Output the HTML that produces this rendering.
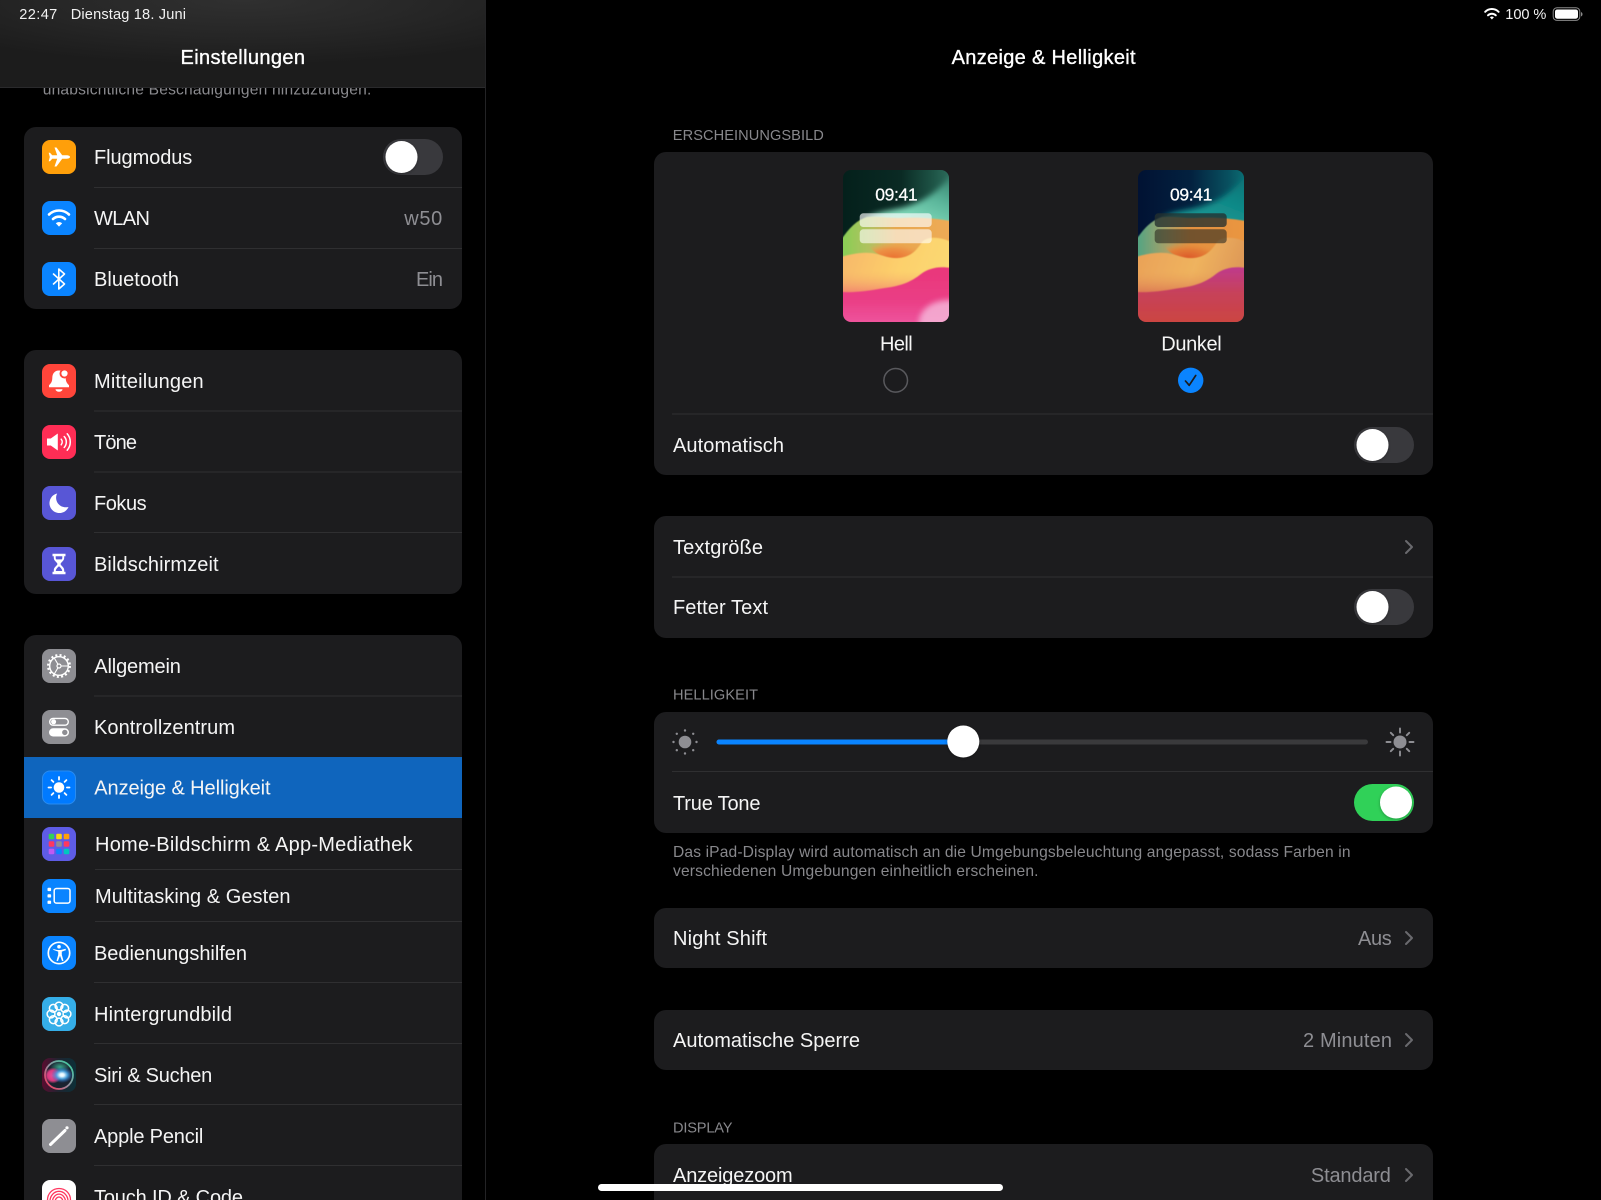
<!DOCTYPE html>
<html lang="de"><head><meta charset="utf-8"><title>Anzeige &amp; Helligkeit</title>
<style>
html,body{margin:0;padding:0;background:#000;overflow:hidden}
svg{display:block}
text{font-family:"Liberation Sans",sans-serif;font-size:20px;fill:#f5f5f5}
.v{fill:#8e8e93}
.s{font-size:14.6px;fill:#88888c}
.f{font-size:15.6px;fill:#88888c}
.b{stroke:#fff;stroke-width:.35;fill:#fff}
.st{font-size:14.6px;fill:#f2f2f2}
.sep{stroke:#2f2f31;stroke-width:1}
.chev{fill:none;stroke:#6a6a6e;stroke-width:2;stroke-linecap:round;stroke-linejoin:round}
</style></head>
<body>
<svg xmlns="http://www.w3.org/2000/svg" width="1601" height="1200" viewBox="0 0 1601 1200">
<defs>
<radialGradient id="hdr" cx=".5" cy="0" r=".75"><stop offset="0" stop-color="#303030"/><stop offset=".55" stop-color="#262626"/><stop offset="1" stop-color="#1c1c1c"/></radialGradient>
<filter id="kshadow" x="-30%" y="-30%" width="160%" height="160%"><feDropShadow dx="0" dy="1" stdDeviation="1.5" flood-color="#000" flood-opacity=".3"/></filter>
<filter id="soft" x="-5%" y="-5%" width="110%" height="110%"><feGaussianBlur stdDeviation=".6"/></filter>
<filter id="soft2" x="-20%" y="-20%" width="140%" height="140%"><feGaussianBlur stdDeviation="3"/></filter>
<clipPath id="thumb"><rect width="106" height="152" rx="8"/></clipPath>
<clipPath id="ic"><rect width="34" height="34" rx="8"/></clipPath>

<linearGradient id="lTop" x1="0" y1="0" x2="1" y2="0"><stop offset="0" stop-color="#04201b"/><stop offset=".55" stop-color="#0a2a24"/><stop offset=".85" stop-color="#1e5446"/><stop offset="1" stop-color="#2c6a5a"/></linearGradient>
<linearGradient id="lMint" x1="1" y1="0" x2=".4" y2="1"><stop offset="0" stop-color="#2f7664"/><stop offset=".45" stop-color="#5cb79c"/><stop offset=".8" stop-color="#7fd8b8"/><stop offset="1" stop-color="#8adfc0"/></linearGradient>
<linearGradient id="lMid" x1="0" y1="0" x2="1" y2="0"><stop offset="0" stop-color="#86cf55"/><stop offset=".28" stop-color="#b6c060"/><stop offset=".5" stop-color="#e8a850"/><stop offset="1" stop-color="#eeaa55"/></linearGradient>
<radialGradient id="lBowl" cx=".5" cy=".95" r=".55"><stop offset="0" stop-color="#ea7232"/><stop offset=".6" stop-color="#ec9245"/><stop offset="1" stop-color="#eda552" stop-opacity="0"/></radialGradient>
<linearGradient id="lYel" x1="0" y1="0" x2="1" y2=".2"><stop offset="0" stop-color="#f6b56a"/><stop offset=".6" stop-color="#fdd06c"/><stop offset="1" stop-color="#fbd872"/></linearGradient>
<linearGradient id="lYel2" x1="0" y1="0" x2="0" y2="1"><stop offset=".35" stop-color="#f5b468" stop-opacity="0"/><stop offset="1" stop-color="#ef6072"/></linearGradient>
<linearGradient id="lPink" x1="0" y1="0" x2="0" y2="1"><stop offset="0" stop-color="#e9367a"/><stop offset=".6" stop-color="#ea3f86"/><stop offset="1" stop-color="#ee569e"/></linearGradient>

<linearGradient id="dTop" x1="0" y1="0" x2="1" y2="0"><stop offset="0" stop-color="#011233"/><stop offset=".5" stop-color="#03213f"/><stop offset=".85" stop-color="#08505f"/><stop offset="1" stop-color="#0b6c72"/></linearGradient>
<linearGradient id="dMint" x1="1" y1="0" x2=".4" y2="1"><stop offset="0" stop-color="#0b6f74"/><stop offset=".5" stop-color="#118a88"/><stop offset="1" stop-color="#18a09a"/></linearGradient>
<linearGradient id="dMid" x1="0" y1="0" x2="1" y2="0"><stop offset="0" stop-color="#4fa584"/><stop offset=".28" stop-color="#a8a068"/><stop offset=".5" stop-color="#e4913f"/><stop offset="1" stop-color="#ea9640"/></linearGradient>
<radialGradient id="dBowl" cx=".5" cy=".95" r=".55"><stop offset="0" stop-color="#dd5a2a"/><stop offset=".6" stop-color="#e37e36"/><stop offset="1" stop-color="#e9923e" stop-opacity="0"/></radialGradient>
<linearGradient id="dYel" x1="0" y1="0" x2="1" y2=".2"><stop offset="0" stop-color="#e9a058"/><stop offset=".6" stop-color="#efb35e"/><stop offset="1" stop-color="#df9a58"/></linearGradient>
<linearGradient id="dYel2" x1="0" y1="0" x2="0" y2="1"><stop offset=".35" stop-color="#e9a058" stop-opacity="0"/><stop offset="1" stop-color="#d25a50"/></linearGradient>
<linearGradient id="dPink" x1="0" y1="0" x2="0" y2="1"><stop offset="0" stop-color="#bf3a8c"/><stop offset=".45" stop-color="#c7425a"/><stop offset="1" stop-color="#cc4540"/></linearGradient>

<linearGradient id="siriBg" x1="0" y1=".5" x2="1" y2=".5"><stop offset="0" stop-color="#5a0c30"/><stop offset=".5" stop-color="#1e2430"/><stop offset="1" stop-color="#0c3038"/></linearGradient>
<linearGradient id="siriRing" x1="0" y1="1" x2="1" y2="0"><stop offset="0" stop-color="#ff2d55"/><stop offset=".5" stop-color="#9090a0"/><stop offset="1" stop-color="#30d8a0"/></linearGradient>
<radialGradient id="siriInner" cx=".5" cy=".5" r=".5"><stop offset="0" stop-color="#fff"/><stop offset=".2" stop-color="#e0f6ff"/><stop offset=".5" stop-color="#4aa8e8" stop-opacity=".9"/><stop offset="1" stop-color="#2060c0" stop-opacity="0"/></radialGradient>
<radialGradient id="siriPink" cx=".5" cy=".5" r=".5"><stop offset="0" stop-color="#f0509a"/><stop offset=".65" stop-color="#d83a80"/><stop offset="1" stop-color="#e8458a" stop-opacity="0"/></radialGradient>
<radialGradient id="siriGreen" cx=".5" cy=".5" r=".5"><stop offset="0" stop-color="#40c8a0" stop-opacity=".8"/><stop offset="1" stop-color="#40c8a0" stop-opacity="0"/></radialGradient>
</defs>

<rect width="1601" height="1200" fill="#000"/>

<!-- Sidebar -->
<rect x="485" y="0" width="1" height="1200" fill="#232325"/>
<text class="f" x="42.7" y="94.7" textLength="328.6" style="fill:#8a8a8e">unabsichtliche Beschädigungen hinzuzufügen.</text>
<rect x="0" y="0" width="485" height="87" fill="url(#hdr)"/>
<rect x="0" y="87" width="485" height="1" fill="#2a2a2c"/>
<text class="st" x="19.3" y="19" textLength="38">22:47</text>
<text class="st" x="70.7" y="19" textLength="115.3">Dienstag 18. Juni</text>
<text class="b" x="180.5" y="64" textLength="124.5">Einstellungen</text>

<!-- Group 1 -->
<rect x="24" y="127" width="438" height="182" rx="12" fill="#1c1c1e"/>
<line class="sep" x1="94" y1="187.5" x2="462" y2="187.5"/>
<line class="sep" x1="94" y1="248.5" x2="462" y2="248.5"/>
<text x="94" y="164" textLength="98.3">Flugmodus</text>
<text x="94" y="225" textLength="56">WLAN</text>
<text x="94" y="286" textLength="85">Bluetooth</text>
<text class="v" x="404.3" y="225" textLength="38">w50</text>
<text class="v" x="416" y="286" textLength="27">Ein</text>
<rect x="383" y="139" width="60" height="36" rx="18" fill="#39393d"/>
<circle cx="401.500" cy="157" r="16" fill="#fff" filter="url(#kshadow)"/>

<g transform="translate(42,140)"><rect width="34" height="34" rx="8" fill="#ff9f0a"/>
<path fill="#fff" d="M28 17c0-1.100-1.800-1.700-3.200-1.700h-4.600L14.500 7.500h-2l2.700 7.800h-5L8 12.700H6.700L7.800 17l-1.100 4.300H8l2.200-2.600h5l-2.700 7.800h2l5.700-7.800h4.600c1.400 0 3.200-.6 3.200-1.700z"/></g>
<g transform="translate(42,201)"><rect width="34" height="34" rx="8" fill="#0a84ff"/>
<g fill="none" stroke="#fff" stroke-width="2.600" stroke-linecap="round"><path d="M7 13.500a14.500 14.500 0 0 1 20 0"/><path d="M11 18a9 9 0 0 1 12 0"/></g>
<path fill="#fff" d="M17 25.600l-3.200-3.300a4.600 4.600 0 0 1 6.400 0z"/></g>
<g transform="translate(42,262)"><rect width="34" height="34" rx="8" fill="#0a84ff"/>
<path fill="none" stroke="#fff" stroke-width="1.600" stroke-linejoin="round" stroke-linecap="round" d="M11.500 12L22.500 22 16.800 27V7L22.500 12 11.500 22"/></g>

<!-- Group 2 -->
<rect x="24" y="350" width="438" height="244" rx="12" fill="#1c1c1e"/>
<line class="sep" x1="94" y1="411" x2="462" y2="411"/>
<line class="sep" x1="94" y1="472" x2="462" y2="472"/>
<line class="sep" x1="94" y1="532.5" x2="462" y2="532.5"/>
<text x="94" y="388" textLength="109.600">Mitteilungen</text>
<text x="94" y="449" textLength="43">Töne</text>
<text x="94" y="510" textLength="52.600">Fokus</text>
<text x="94" y="571" textLength="124.600">Bildschirmzeit</text>

<g transform="translate(42,364)"><rect width="34" height="34" rx="8" fill="#ff453a"/>
<path fill="#fff" d="M17 6.500c-4.400 0-6.600 3.200-6.700 7.200-.1 3.400-.7 5-3.300 7.600v2h20v-2c-2.600-2.600-3.200-4.200-3.300-7.600C23.600 9.700 21.400 6.500 17 6.500z"/>
<path fill="#fff" d="M13.500 25.200h7a3.500 2.600 0 0 1-7 0z"/>
<circle cx="22.500" cy="9.500" r="5" fill="#ff453a"/><circle cx="22.500" cy="9.500" r="3.100" fill="#fff"/></g>
<g transform="translate(42,425)"><rect width="34" height="34" rx="8" fill="#ff2d55"/>
<path fill="#fff" d="M5 13.500h3.800L15.800 8.500v17L8.800 20.500H5z"/>
<g fill="none" stroke="#fff" stroke-width="1.500" stroke-linecap="round"><path d="M19.200 14.200a4.500 4.500 0 0 1 0 5.600"/><path d="M22.200 11.500a8.200 8.200 0 0 1 0 11"/><path d="M25.200 8.800a12.500 12.500 0 0 1 0 16.400"/></g></g>
<g transform="translate(42,486)"><rect width="34" height="34" rx="8" fill="#5856d6"/>
<path fill="#fff" d="M15.200 7.500a9.900 9.900 0 1 0 11.300 13.500c-.9.200-1.800.3-2.700.3-6 0-9.700-4.700-9.700-9.500 0-1.600.4-3.100 1.100-4.300z"/></g>
<g transform="translate(42,547)"><rect width="34" height="34" rx="8" fill="#5856d6"/>
<path fill="#fff" d="M10.500 6.800h13v2.400h-1.300v1.800c0 3-3.600 4.400-3.600 6s3.600 3 3.600 6v1.800h1.300v2.400h-13v-2.400h1.300V23c0-3 3.600-4.400 3.600-6s-3.600-3-3.600-6V9.200h-1.300z"/>
<path fill="#5856d6" d="M13.700 9.200h6.600v1.700c0 .6-.2 1.100-.5 1.500h-5.600c-.3-.4-.5-.9-.5-1.500zM17 19.200c-1 1-3 2.300-3.200 4.800h6.400c-.2-2.500-2.200-3.800-3.200-4.800z"/></g>

<!-- Group 3 -->
<rect x="24" y="635" width="438" height="600" rx="12" fill="#1c1c1e"/>
<line class="sep" x1="94" y1="696" x2="462" y2="696"/>
<rect x="24" y="757" width="438" height="61" fill="#0f65bd"/>
<line class="sep" x1="95" y1="869.500" x2="462" y2="869.500"/>
<line class="sep" x1="95" y1="921.500" x2="462" y2="921.500"/>
<line class="sep" x1="94" y1="982.500" x2="462" y2="982.500"/>
<line class="sep" x1="94" y1="1043.500" x2="462" y2="1043.500"/>
<line class="sep" x1="94" y1="1104.500" x2="462" y2="1104.500"/>
<line class="sep" x1="94" y1="1165.500" x2="462" y2="1165.500"/>
<text x="94.300" y="673" textLength="86.600">Allgemein</text>
<text x="94" y="734" textLength="141">Kontrollzentrum</text>
<text x="94.300" y="794.500" textLength="176.300">Anzeige &amp; Helligkeit</text>
<text x="95" y="851" textLength="317.500">Home-Bildschirm &amp; App-Mediathek</text>
<text x="95" y="903" textLength="195.500">Multitasking &amp; Gesten</text>
<text x="94" y="960" textLength="153">Bedienungshilfen</text>
<text x="94" y="1021" textLength="138">Hintergrundbild</text>
<text x="94" y="1082" textLength="118.300">Siri &amp; Suchen</text>
<text x="94" y="1143" textLength="109.300">Apple Pencil</text>
<text x="94" y="1204" textLength="149">Touch ID &amp; Code</text>

<g transform="translate(42,649)"><rect width="34" height="34" rx="8" fill="#8e8e93"/>
<g fill="none" stroke="#fff"><circle cx="17" cy="17" r="10.900" stroke-width="2.200" stroke-dasharray="2 2.300"/><circle cx="17" cy="17" r="9.300" stroke-width="1.400"/><circle cx="17" cy="17" r="2" stroke-width="1.200"/>
<path stroke-width="1.100" d="M19 17h7.500M16 15.300l-3.800-6.400M16 18.700l-3.800 6.400"/></g></g>
<g transform="translate(42,710)"><rect width="34" height="34" rx="8" fill="#8e8e93"/>
<rect x="7.700" y="8.400" width="18.600" height="6.800" rx="3.400" fill="none" stroke="#fff" stroke-width="1.400"/><circle cx="11.600" cy="11.800" r="2.500" fill="#fff"/>
<rect x="7" y="18.300" width="20" height="8.200" rx="4.100" fill="#fff"/><circle cx="22.800" cy="22.400" r="2.700" fill="#8e8e93"/></g>
<g transform="translate(42,770.500)"><rect x=".5" y=".5" width="33" height="33" rx="7.500" fill="#007aff" stroke="#2a8cf0"/>
<circle cx="17" cy="17" r="5.300" fill="#fff"/>
<g stroke="#fff" stroke-width="1.800" stroke-linecap="round"><path d="M17 6.500v2.600M17 24.900v2.600M6.500 17h2.600M24.900 17h2.600M9.600 9.600l1.800 1.800M22.600 22.600l1.800 1.800M9.600 24.400l1.800-1.800M22.600 11.400l1.800-1.800"/></g></g>
<g transform="translate(42,827)"><rect width="34" height="34" rx="8" fill="#5e5ce6"/>
<g><rect x="6.700" y="6.700" width="5.600" height="5.600" rx="1.200" fill="#30d158"/><rect x="14.200" y="6.700" width="5.600" height="5.600" rx="1.200" fill="#ffd60a"/><rect x="21.700" y="6.700" width="5.600" height="5.600" rx="1.200" fill="#ff9f0a"/>
<rect x="6.700" y="14.200" width="5.600" height="5.600" rx="1.200" fill="#ff375f"/><rect x="14.200" y="14.200" width="5.600" height="5.600" rx="1.200" fill="#8e8e93"/><rect x="21.700" y="14.200" width="5.600" height="5.600" rx="1.200" fill="#ff375f"/>
<rect x="6.700" y="21.700" width="5.600" height="5.600" rx="1.200" fill="#bf5af2"/><rect x="14.200" y="21.700" width="5.600" height="5.600" rx="1.200" fill="#0a84ff"/><rect x="21.700" y="21.700" width="5.600" height="5.600" rx="1.200" fill="#00c7be"/></g></g>
<g transform="translate(42,879)"><rect width="34" height="34" rx="8" fill="#0a84ff"/>
<rect x="12.200" y="9.500" width="15.800" height="14.600" rx="2.200" fill="none" stroke="#fff" stroke-width="1.500"/>
<rect x="5.500" y="8.800" width="3.600" height="3.300" rx=".8" fill="#fff"/><rect x="5.500" y="15.200" width="3.600" height="3.300" rx=".8" fill="#fff"/><rect x="5.500" y="21.600" width="3.600" height="3.300" rx=".8" fill="#fff"/></g>
<g transform="translate(42,936)"><rect width="34" height="34" rx="8" fill="#0a84ff"/>
<circle cx="17" cy="17" r="10.700" fill="none" stroke="#fff" stroke-width="1.700"/>
<circle cx="17" cy="10.700" r="1.800" fill="#fff"/>
<path fill="#fff" d="M10.500 12.700l4.600 1.300h3.800l4.600-1.300.5 1.400-4.200 1.500v3.200l1.700 5.900-1.400.4-2.100-5.400-2.100 5.400-1.400-.4 1.700-5.900v-3.200l-4.200-1.500z"/></g>
<g transform="translate(42,997)"><rect width="34" height="34" rx="8" fill="#35aee8"/>
<g fill="none" stroke="#fff" stroke-width="1.500"><circle cx="17" cy="9" r="3.900"/><circle cx="17" cy="25" r="3.900"/><circle cx="9" cy="17" r="3.900"/><circle cx="25" cy="17" r="3.900"/><circle cx="11.300" cy="11.300" r="3.900"/><circle cx="22.700" cy="11.300" r="3.900"/><circle cx="11.300" cy="22.700" r="3.900"/><circle cx="22.700" cy="22.700" r="3.900"/></g><circle cx="17" cy="17" r="2.200" fill="#fff"/></g>
<g transform="translate(42,1058)"><g clip-path="url(#ic)"><rect width="34" height="34" fill="url(#siriBg)"/>
<circle cx="17" cy="17" r="14" fill="#1a2230" stroke="url(#siriRing)" stroke-width="1.800"/>
<ellipse cx="18" cy="9" rx="10" ry="6" fill="url(#siriGreen)"/>
<ellipse cx="11" cy="17.500" rx="8.500" ry="8" fill="url(#siriPink)"/>
<ellipse cx="20" cy="17" rx="11" ry="8" fill="url(#siriInner)"/></g></g>
<g transform="translate(42,1119)"><rect width="34" height="34" rx="8" fill="#8e8e93"/>
<path d="M8.500 25.500L23 11.500" stroke="#fff" stroke-width="3" stroke-linecap="round"/><circle cx="25" cy="8.800" r="1.600" fill="#fff"/></g>
<g transform="translate(42,1180)"><rect width="34" height="34" rx="8" fill="#fff"/>
<g fill="none" stroke="#ff375f" stroke-width="1.300" stroke-linecap="round"><path d="M5.500 20c0-6.500 5-11.500 11.500-11.500S28.500 13.500 28.500 20"/><path d="M8 21c0-5 4-9.700 9-9.700s9 4.700 9 9.700"/><path d="M10.500 21.500c0-3.700 3-7.400 6.500-7.400s6.500 3.700 6.500 7.400"/><path d="M13 22c0-2.500 1.800-5 4-5s4 2.500 4 5"/></g></g>

<!-- Right pane -->
<text class="st" x="1505.300" y="19" textLength="41">100 %</text>
<g transform="translate(1484,7.500)"><g fill="none" stroke="#fff" stroke-width="2" stroke-linecap="round"><path d="M1.200 4.300a9.500 9.500 0 0 1 13.400 0"/><path d="M4 7.800a5.600 5.600 0 0 1 7.800 0"/></g><path d="M7.900 12l-2-2.200a3 3 0 0 1 4 0z" fill="#fff"/></g>
<rect x="1553.200" y="7.800" width="26.600" height="12.600" rx="3.800" fill="none" stroke="#8a8a8a" stroke-width="1"/>
<rect x="1555" y="9.500" width="23" height="9.200" rx="2.200" fill="#fff"/>
<path d="M1581 12v4.400c.9-.3 1.500-1.200 1.500-2.200s-.6-1.900-1.500-2.200z" fill="#8a8a8a"/>
<text class="b" x="951.600" y="64" textLength="184">Anzeige &amp; Helligkeit</text>

<text class="s" x="672.800" y="140" textLength="151">ERSCHEINUNGSBILD</text>
<rect x="654" y="152" width="779" height="323" rx="12" fill="#1c1c1e"/>

<!-- Light thumb -->
<g transform="translate(843,170)"><g clip-path="url(#thumb)">
<rect width="106" height="152" fill="url(#lTop)"/>
<path filter="url(#soft2)" fill="url(#lMint)" d="M112 2C98 18 84 31 62 37 46 41 30 42 22 50L30 62H112z"/>
<path filter="url(#soft)" fill="url(#lMid)" d="M-2 70C6 58 14 50 24 47 35 46 45 48 56 48 75 47 90 48 108 51V100H-2z"/>
<path filter="url(#soft)" fill="url(#lBowl)" d="M18 62H82C80 78 66 90 50 89 36 88 24 78 18 62z"/>
<path filter="url(#soft)" fill="url(#lYel)" d="M-2 87C8 84 18 82 28 83 38 84 45 89 56 88 68 87 74 80 79 72 86 65 100 68 108 72V130H-2z"/>
<rect y="85" width="106" height="45" fill="url(#lYel2)"/>
<path filter="url(#soft)" fill="url(#lPink)" d="M-2 122C14 123 30 120 42 118 58 116 68 112 78 104 86 98 96 96 108 98V154H-2z"/>
<ellipse cx="106" cy="152" rx="30" ry="22" fill="#f5b4d8" opacity=".85" filter="url(#soft2)"/>
</g>
<rect x="16.700" y="43.300" width="72" height="13.700" rx="3.500" fill="#fff" opacity=".64"/>
<rect x="16.700" y="59.300" width="72" height="14" rx="3.500" fill="#fff" opacity=".6"/>
<text x="32.300" y="30.700" textLength="42.300" style="font-size:17.500px;fill:#fff;stroke:#fff;stroke-width:.25">09:41</text></g>

<!-- Dark thumb -->
<g transform="translate(1138,170)"><g clip-path="url(#thumb)">
<rect width="106" height="152" fill="url(#dTop)"/>
<path filter="url(#soft2)" fill="url(#dMint)" d="M112 2C98 18 84 31 62 37 46 41 30 42 22 50L30 62H112z"/>
<path filter="url(#soft)" fill="url(#dMid)" d="M-2 70C6 58 14 50 24 47 35 46 45 48 56 48 75 47 90 48 108 51V100H-2z"/>
<path filter="url(#soft)" fill="url(#dBowl)" d="M18 62H82C80 78 66 90 50 89 36 88 24 78 18 62z"/>
<path filter="url(#soft)" fill="url(#dYel)" d="M-2 87C8 84 18 82 28 83 38 84 45 89 56 88 68 87 74 80 79 72 86 65 100 68 108 72V130H-2z"/>
<rect y="85" width="106" height="45" fill="url(#dYel2)"/>
<path filter="url(#soft)" fill="url(#dPink)" d="M-2 122C14 123 30 120 42 118 58 116 68 112 78 104 86 98 96 96 108 98V154H-2z"/>
</g>
<rect x="16.700" y="43.300" width="72" height="13.700" rx="3.500" fill="#24302e" opacity=".78"/>
<rect x="16.700" y="59.300" width="72" height="14" rx="3.500" fill="#2a2a22" opacity=".6"/>
<text x="32" y="30.700" textLength="42.300" style="font-size:17.500px;fill:#fff;stroke:#fff;stroke-width:.25">09:41</text></g>

<text x="880" y="350.700" textLength="32.700">Hell</text>
<text x="1161.300" y="350.700" textLength="60.400">Dunkel</text>
<circle cx="895.700" cy="380.300" r="11.800" fill="none" stroke="#59595d" stroke-width="1.500"/>
<circle cx="1190.700" cy="380.300" r="12.700" fill="#0a84ff"/>
<path d="M1185.500 381l3.700 4.300 6.500-9.800" fill="none" stroke="#1c1c1e" stroke-width="1.700" stroke-linecap="round" stroke-linejoin="round"/>
<line class="sep" x1="672" y1="414" x2="1433" y2="414"/>
<text x="673" y="452" textLength="111">Automatisch</text>
<rect x="1354" y="427" width="60" height="36" rx="18" fill="#39393d"/>
<circle cx="1372.500" cy="445" r="16" fill="#fff" filter="url(#kshadow)"/>

<rect x="654" y="516" width="779" height="122" rx="12" fill="#1c1c1e"/>
<line class="sep" x1="672" y1="577" x2="1433" y2="577"/>
<text x="673" y="554" textLength="90">Textgröße</text>
<text x="673" y="614" textLength="95">Fetter Text</text>
<path class="chev" d="M1406 541l6 6-6 6"/>
<rect x="1354" y="589" width="60" height="36" rx="18" fill="#39393d"/>
<circle cx="1372.500" cy="607" r="16" fill="#fff" filter="url(#kshadow)"/>

<text class="s" x="673" y="699.500" textLength="85">HELLIGKEIT</text>
<rect x="654" y="712" width="779" height="121" rx="12" fill="#1c1c1e"/>
<line class="sep" x1="672" y1="771.500" x2="1433" y2="771.500"/>
<rect x="716.500" y="739.500" width="651.500" height="5" rx="2.500" fill="#3a3a3c"/>
<path d="M719 739.500H960v5H719a2.500 2.500 0 0 1 0-5z" fill="#0a84ff"/>
<circle cx="963.300" cy="741.500" r="16" fill="#fff" filter="url(#kshadow)"/>
<g transform="translate(685,742)" fill="#8e8e93"><circle r="6.300"/><circle cx="0" cy="-11.500" r="1.200"/><circle cx="0" cy="11.500" r="1.200"/><circle cx="-11.500" cy="0" r="1.200"/><circle cx="11.500" cy="0" r="1.200"/><circle cx="-8.200" cy="-8.200" r="1.200"/><circle cx="8.200" cy="-8.200" r="1.200"/><circle cx="-8.200" cy="8.200" r="1.200"/><circle cx="8.200" cy="8.200" r="1.200"/></g>
<g transform="translate(1400,742)"><circle r="6.500" fill="#8e8e93"/><g stroke="#8e8e93" stroke-width="1.900" stroke-linecap="round"><path d="M0-9.500v-4M0 9.500v4M-9.500 0h-4M9.500 0h4M-6.800-6.800l-2.400-2.400M6.800-6.800l2.400-2.400M-6.800 6.800l-2.400 2.400M6.800 6.800l2.400 2.400"/></g></g>
<text x="673" y="810" textLength="87.500">True Tone</text>
<rect x="1354" y="784" width="60" height="37" rx="18.500" fill="#30d158"/>
<circle cx="1396" cy="802.500" r="16" fill="#fff" filter="url(#kshadow)"/>
<text class="f" x="673" y="857" textLength="677.500">Das iPad-Display wird automatisch an die Umgebungsbeleuchtung angepasst, sodass Farben in</text>
<text class="f" x="673" y="876" textLength="365.500">verschiedenen Umgebungen einheitlich erscheinen.</text>

<rect x="654" y="908" width="779" height="60" rx="12" fill="#1c1c1e"/>
<text x="673" y="945" textLength="94">Night Shift</text>
<text class="v" x="1358" y="945" textLength="33.700">Aus</text>
<path class="chev" d="M1406 932l6 6-6 6"/>

<rect x="654" y="1010" width="779" height="60" rx="12" fill="#1c1c1e"/>
<text x="673" y="1047" textLength="187">Automatische Sperre</text>
<text class="v" x="1303" y="1047" textLength="89">2 Minuten</text>
<path class="chev" d="M1406 1034l6 6-6 6"/>

<text class="s" x="673" y="1132.700" textLength="59.500">DISPLAY</text>
<rect x="654" y="1144" width="779" height="90" rx="12" fill="#1c1c1e"/>
<text x="673" y="1182" textLength="119.700">Anzeigezoom</text>
<text class="v" x="1310.900" y="1182" textLength="80">Standard</text>
<path class="chev" d="M1406 1169l6 6-6 6"/>

<rect x="598" y="1184" width="405" height="7" rx="3.500" fill="#fff"/>
</svg>
</body></html>
